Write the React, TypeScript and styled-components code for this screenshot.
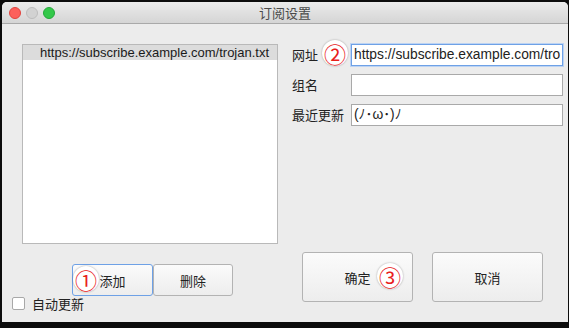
import { createGlobalStyle, styled } from "styled-components";

const Global = createGlobalStyle`
    html, body {
        margin: 0;
        padding: 0;
        background: #0c0c0c;
    }
    body {
        font-family: "Liberation Sans", "Noto Sans CJK SC", sans-serif;
        color: #222;
    }
`;

const Screen = styled.div`
    width: 569px;
    height: 328px;
    padding: 2px 1px 0 2px;
    box-sizing: border-box;
`;

const Window = styled.div`
    width: 566px;
    height: 320px;
    background: #ececec;
    border-radius: 5px 5px 0 0;
    overflow: hidden;
    display: flex;
    flex-direction: column;
`;

const TitleBar = styled.div`
    height: 21px;
    flex: none;
    position: relative;
    display: flex;
    align-items: center;
    justify-content: center;
    background: linear-gradient(#ebebeb, #d5d5d5);
    border-bottom: 1px solid #a9a9a9;
`;

const Lights = styled.div`
    position: absolute;
    left: 7px;
    top: 5px;
    display: flex;
    gap: 5px;
`;

const Light = styled.span<{ $color: string; $ring: string }>`
    width: 12px;
    height: 12px;
    border-radius: 50%;
    box-sizing: border-box;
    background: ${(p) => p.$color};
    border: 1px solid ${(p) => p.$ring};
`;

const Title = styled.div`
    font-size: 13px;
    color: #4a4a4a;
    font-family: "Noto Sans CJK SC", sans-serif;
`;

const Body = styled.div`
    flex: 1;
    display: flex;
`;

const LeftCol = styled.div`
    width: 290px;
    padding: 20px 0 0 10px;
    box-sizing: border-box;
    display: flex;
    flex-direction: column;
`;

const List = styled.div`
    margin-left: 10px;
    width: 256px;
    height: 200px;
    background: #fff;
    border: 1px solid #b9b9b9;
    box-sizing: border-box;
`;

const ListItem = styled.div<{ $selected?: boolean }>`
    height: 15px;
    line-height: 15px;
    font-size: 13px;
    padding-left: 17px;
    background: ${(p) => (p.$selected ? "#dcdcdc" : "transparent")};
    color: #1a1a1a;
    white-space: nowrap;
`;

const ButtonRow = styled.div`
    display: flex;
    margin: 20px 0 0 60px;
`;

const Button = styled.button<{ $w: number; $h: number; $focus?: boolean }>`
    position: relative;
    width: ${(p) => p.$w}px;
    height: ${(p) => p.$h}px;
    font-family: "Noto Sans CJK SC", sans-serif;
    font-size: 13px;
    color: #222;
    background: linear-gradient(#fbfbfb, #ededed);
    border: 1px solid ${(p) => (p.$focus ? "#6ea1e6" : "#b3b3b3")};
    border-radius: 3px;
    padding: 0;
    display: flex;
    align-items: center;
    justify-content: center;
`;

const CheckRow = styled.label`
    display: flex;
    align-items: center;
    gap: 7px;
    margin-top: -2px;
    font-size: 13px;
    font-family: "Noto Sans CJK SC", sans-serif;
`;

const Box = styled.span`
    width: 13px;
    height: 13px;
    box-sizing: border-box;
    background: #fff;
    border: 1px solid #a8a8a8;
    border-radius: 2px;
`;

const RightCol = styled.div`
    flex: 1;
    padding: 20px 3px 0 0;
    display: flex;
    flex-direction: column;
`;

const Form = styled.div`
    display: grid;
    grid-template-columns: 59px 212px;
    row-gap: 8px;
    align-items: center;
`;

const Label = styled.div`
    position: relative;
    font-family: "Noto Sans CJK SC", sans-serif;
    font-size: 13px;
    color: #222;
    height: 22px;
    line-height: 22px;
`;

const Input = styled.div<{ $focus?: boolean }>`
    height: 22px;
    box-sizing: border-box;
    background: #fff;
    border: 1px solid ${(p) => (p.$focus ? "#6ea1e6" : "#a9a9a9")};
    box-shadow: ${(p) => (p.$focus ? "0 0 0 1px #bcd3f3" : "none")};
    font-size: 13.8px;
    line-height: 20px;
    padding-left: 2px;
    white-space: nowrap;
    overflow: hidden;
    font-family: "Liberation Sans", "Noto Sans CJK SC", sans-serif;
`;

const ActionRow = styled.div`
    display: flex;
    gap: 19px;
    margin: 126px 0 0 10px;
`;

const Badge = styled.span<{ $left: number; $top: number }>`
    position: absolute;
    left: ${(p) => p.$left}px;
    top: ${(p) => p.$top}px;
    width: 26px;
    height: 26px;
    border-radius: 50%;
    background: #fff;
    box-shadow: 0 0 2px rgba(0, 0, 0, 0.35);
    display: flex;
    align-items: center;
    justify-content: center;
    color: #e8201c;
    font-size: 22px;
    line-height: 1;
    font-family: "Noto Sans CJK SC", "DejaVu Sans", sans-serif;
`;

const App = () => {
    return (
        <Screen>
            <Global />
            <Window>
                <TitleBar>
                    <Lights>
                        <Light $color="#fc605c" $ring="#e0443e" />
                        <Light $color="#d2d2d2" $ring="#bcbcbc" />
                        <Light $color="#34c84a" $ring="#24a83a" />
                    </Lights>
                    <Title>订阅设置</Title>
                </TitleBar>
                <Body>
                    <LeftCol>
                        <List>
                            <ListItem $selected>https://subscribe.example.com/trojan.txt</ListItem>
                        </List>
                        <ButtonRow>
                            <Button $w={81} $h={32} $focus>
                                添加
                                <Badge $left={0} $top={1}>①</Badge>
                            </Button>
                            <Button $w={80} $h={32}>删除</Button>
                        </ButtonRow>
                        <CheckRow>
                            <Box />
                            自动更新
                        </CheckRow>
                    </LeftCol>
                    <RightCol>
                        <Form>
                            <Label>
                                网址
                                <Badge $left={30} $top={-4}>②</Badge>
                            </Label>
                            <Input $focus>https://subscribe.example.com/tro</Input>
                            <Label>组名</Label>
                            <Input />
                            <Label>最近更新</Label>
                            <Input>(ﾉ･ω･)ﾉ</Input>
                        </Form>
                        <ActionRow>
                            <Button $w={111} $h={50}>
                                确定
                                <Badge $left={74} $top={10}>③</Badge>
                            </Button>
                            <Button $w={111} $h={50}>取消</Button>
                        </ActionRow>
                    </RightCol>
                </Body>
            </Window>
        </Screen>
    );
};

export default App;
